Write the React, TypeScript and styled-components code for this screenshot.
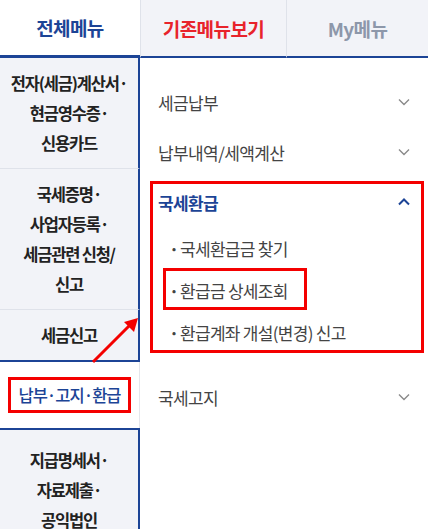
import * as React from 'react'
import styled, { createGlobalStyle, css } from 'styled-components'

const navy = '#1c4496'
const grayBg = '#f2f3f8'
const lineGray = '#dfe2ea'
const alertRed = '#f40000'

const GlobalStyle = createGlobalStyle`
  html, body {
    margin: 0;
    padding: 0;
    background: #fff;
  }

  body {
    font-family: 'Noto Sans CJK KR', 'Noto Sans', sans-serif;
    color: #222;
  }
`

const Screen = styled.div`
  position: relative;
  width: 428px;
  height: 529px;
  overflow: hidden;
  background: #fff;
`

const TabBar = styled.div`
  display: grid;
  grid-template-columns: 140px 146px 1fr;
  height: 58px;
`

interface TabProps {
  $active?: boolean
  $color: string
}

const Tab = styled.div<TabProps>`
  display: flex;
  align-items: center;
  justify-content: center;
  font-size: 19px;
  font-weight: 700;
  letter-spacing: -0.6px;
  color: ${(p) => p.$color};
  background: ${grayBg};
  border-left: 1px solid ${lineGray};
  border-bottom: 2px solid ${navy};
  padding-top: 1px;

  ${(p) =>
    p.$active &&
    css`
      background: #fff;
      border-left: none;
      border-bottom: 3px solid ${navy};
      padding-top: 0;
      padding-bottom: 1px;
    `}
`

const Body = styled.div`
  display: grid;
  grid-template-columns: 140px 1fr;
  align-items: start;
`

const Side = styled.div`
  display: flex;
  flex-direction: column;
`

interface SideItemProps {
  $active?: boolean
  $beforeActive?: boolean
  $afterActive?: boolean
}

const SideItem = styled.div<SideItemProps>`
  padding: 10px 4px;
  text-align: center;
  font-size: 16.5px;
  font-weight: 700;
  line-height: 30px;
  letter-spacing: -1.2px;
  color: #222;
  background: ${grayBg};
  border-right: 2px solid ${navy};
  border-bottom: 1px solid ${lineGray};

  ${(p) =>
    p.$beforeActive &&
    css`
      border-bottom: 2px solid ${navy};
    `}

  ${(p) =>
    p.$afterActive &&
    css`
      border-top: 2px solid ${navy};
      padding-top: 15px;
    `}

  ${(p) =>
    p.$active &&
    css`
      padding: 15px 0;
      background: #fff;
      border-right: 1px solid #e4e6ec;
      border-bottom: none;
      color: ${navy};
      font-weight: 500;
      letter-spacing: -1px;
    `}
`

const Marked = styled.span`
  display: inline-block;
  padding: 0 7px;
  line-height: 30px;
  border: 3px solid ${alertRed};
`

const Panel = styled.div`
  padding-top: 19px;
`

const Row = styled.div<{ $open?: boolean }>`
  display: flex;
  align-items: center;
  justify-content: space-between;
  height: 50px;
  padding: 0 17px 0 18px;
  font-size: 17px;
  letter-spacing: -0.6px;
  color: ${(p) => (p.$open ? navy : '#444')};
  font-weight: ${(p) => (p.$open ? 700 : 400)};
`

const Group = styled.div`
  position: relative;

  &::after {
    content: '';
    position: absolute;
    left: 10px;
    right: 4px;
    top: 4px;
    bottom: 19px;
    border: 3px solid ${alertRed};
    pointer-events: none;
  }
`

const SubList = styled.ul`
  margin: 0;
  padding: 0 0 19px;
  list-style: none;
`

const SubItem = styled.li<{ $marked?: boolean }>`
  position: relative;
  display: flex;
  align-items: center;
  height: 42px;
  padding-left: 29px;
  font-size: 17px;
  letter-spacing: -0.7px;
  color: #444;

  &::before {
    content: '·';
    width: 11px;
    font-weight: 700;
  }

  ${(p) =>
    p.$marked &&
    css`
      &::after {
        content: '';
        position: absolute;
        left: 23px;
        width: 144px;
        top: -1px;
        bottom: 1px;
        box-sizing: border-box;
        border: 3px solid ${alertRed};
      }
    `}
`

const Pointer = styled.svg`
  position: absolute;
  left: 88px;
  top: 312px;
  width: 56px;
  height: 56px;
  pointer-events: none;
`

const Chevron = ({ up, color }: { up?: boolean; color: string }) => (
  <svg width="14" height="10" viewBox="0 0 14 10">
    <path
      d={up ? 'M2 7.5 L7 2.5 L12 7.5' : 'M2 2.5 L7 7.5 L12 2.5'}
      fill="none"
      stroke={color}
      strokeWidth={up ? 2 : 1.4}
    />
  </svg>
)

const sideMenu = [
  ['전자(세금)계산서·', '현금영수증·', '신용카드'],
  ['국세증명·', '사업자등록·', '세금관련 신청/', '신고'],
  ['세금신고'],
  ['납부·고지·환급'],
  ['지급명세서·', '자료제출·', '공익법인'],
]

const activeIndex = 3

const refundItems = ['국세환급금 찾기', '환급금 상세조회', '환급계좌 개설(변경) 신고']

const App: React.FunctionComponent = () => {
  return (
    <Screen>
      <GlobalStyle />
      <TabBar>
        <Tab $active $color={navy}>
          전체메뉴
        </Tab>
        <Tab $color="#e8232b">기존메뉴보기</Tab>
        <Tab $color="#8d97aa">My메뉴</Tab>
      </TabBar>

      <Body>
        <Side>
          {sideMenu.map((lines, i) => (
            <SideItem
              key={lines[0]}
              $active={i === activeIndex}
              $beforeActive={i === activeIndex - 1}
              $afterActive={i === activeIndex + 1}
            >
              {i === activeIndex ? (
                <Marked>{lines[0]}</Marked>
              ) : (
                lines.map((line) => <div key={line}>{line}</div>)
              )}
            </SideItem>
          ))}
        </Side>

        <Panel>
          <Row>
            세금납부
            <Chevron color="#8a8a8a" />
          </Row>
          <Row>
            납부내역/세액계산
            <Chevron color="#8a8a8a" />
          </Row>
          <Group>
            <Row $open>
              국세환급
              <Chevron up color={navy} />
            </Row>
            <SubList>
              {refundItems.map((item, i) => (
                <SubItem key={item} $marked={i === 1}>
                  {item}
                </SubItem>
              ))}
            </SubList>
          </Group>
          <Row>
            국세고지
            <Chevron color="#8a8a8a" />
          </Row>
        </Panel>
      </Body>

      <Pointer viewBox="0 0 56 56">
        <line x1="5" y1="50" x2="42" y2="13" stroke={alertRed} strokeWidth="3" />
        <polygon points="50,6 36,10 46,20" fill={alertRed} />
      </Pointer>
    </Screen>
  )
}

export default App
